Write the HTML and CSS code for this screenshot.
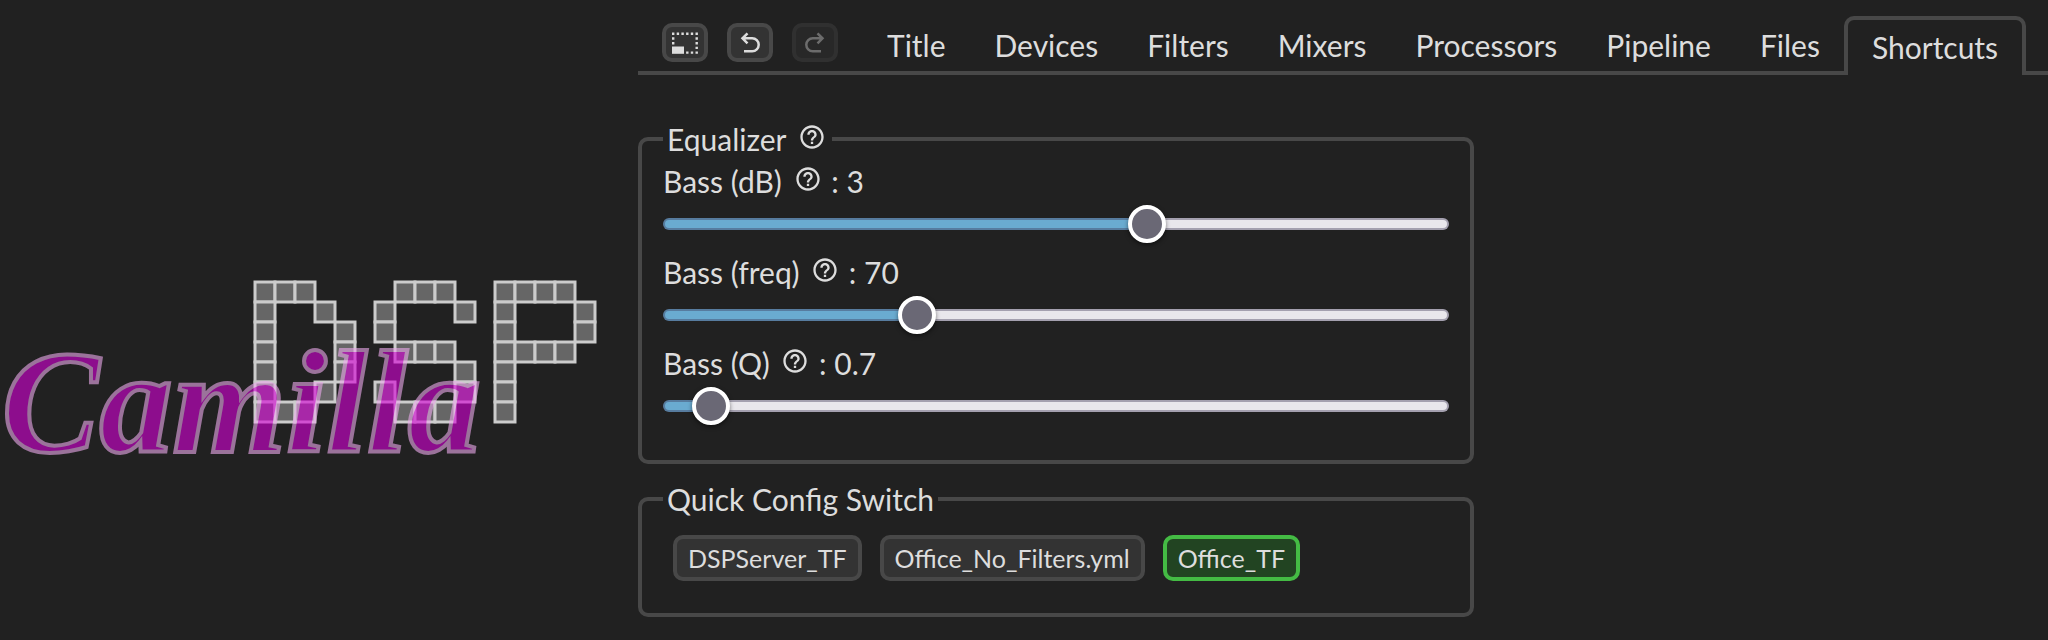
FILE: index.html
```
<!DOCTYPE html>
<html lang="en">
<head>
  <meta charset="UTF-8">
  <meta name="viewport" content="width=device-width, initial-scale=1.0">
  <title>CamillaDSP</title>
  <link rel="stylesheet" href="styles.css">
</head>
<body>
  <svg width="0" height="0" class="defs">
    <symbol id="help" viewBox="0 0 24 24">
      <path d="M11 18h2v-2h-2v2zm1-16C6.48 2 2 6.48 2 12s4.480 10 10 10 10-4.480 10-10S17.520 2 12 2zm0 18c-4.410 0-8-3.590-8-8s3.590-8 8-8 8 3.590 8 8-3.590 8-8 8zm0-14c-2.210 0-4 1.790-4 4h2c0-1.100.9-2 2-2s2 .9 2 2c0 2-3 1.750-3 5h2c0-2.250 3-2.500 3-5 0-2.210-1.790-4-4-4z"/>
    </symbol>
  </svg>

  <div class="app">
    <aside class="sidebar">
      <svg class="logo" viewBox="0 0 600 230" role="img" aria-label="CamillaDSP">
        <g id="tiles" class="tiles"></g>
        <text class="logo-name" x="2" y="174">Camilla</text>
      </svg>
    </aside>

    <main class="main">
      <nav class="tabs">
        <div class="tools">
          <button type="button" class="tool" aria-label="Compact view">
            <svg viewBox="0 0 28 24" width="28" height="24">
              <path class="dots" d="M1 2.800H27M2.200 6.300V14M25.700 6.300V23M15.100 21.600H23"/>
              <rect x="1" y="15.500" width="12" height="7.300"/>
            </svg>
          </button>
          <button type="button" class="tool" aria-label="Undo">
            <svg viewBox="0 0 24 24" width="24" height="24">
              <path class="line" d="M9.500 2.300L4.500 7.300L9.500 12.300M5 7.300H14.200A6.500 6.500 0 0 1 14.200 20.300H6"/>
            </svg>
          </button>
          <button type="button" class="tool" aria-label="Redo" disabled>
            <svg viewBox="0 0 24 24" width="24" height="24">
              <path class="line" d="M14.500 2.300L19.500 7.300L14.500 12.300M19 7.300H9.800A6.500 6.500 0 0 0 9.800 20.300H18"/>
            </svg>
          </button>
        </div>
        <a class="tab" href="#title">Title</a>
        <a class="tab" href="#devices">Devices</a>
        <a class="tab" href="#filters">Filters</a>
        <a class="tab" href="#mixers">Mixers</a>
        <a class="tab" href="#processors">Processors</a>
        <a class="tab" href="#pipeline">Pipeline</a>
        <a class="tab" href="#files">Files</a>
        <a class="tab active" href="#shortcuts">Shortcuts</a>
        <div class="tabs-rest"></div>
      </nav>

      <div class="panels">
        <fieldset class="box equalizer">
          <legend>Equalizer <svg class="help"><use href="#help"/></svg></legend>
          <div class="shortcut">
            <label for="bass-db">Bass (dB) <svg class="help"><use href="#help"/></svg> : <span>3</span></label>
            <input type="range" id="bass-db" min="-12" max="12" step="0.1" value="3">
          </div>
          <div class="shortcut">
            <label for="bass-freq">Bass (freq) <svg class="help"><use href="#help"/></svg> : <span>70</span></label>
            <input type="range" id="bass-freq" min="20" max="178" step="1" value="70">
          </div>
          <div class="shortcut">
            <label for="bass-q">Bass (Q) <svg class="help"><use href="#help"/></svg> : <span>0.7</span></label>
            <input type="range" id="bass-q" min="0.1" max="15.5" step="0.1" value="0.7">
          </div>
        </fieldset>

        <fieldset class="box">
          <legend>Quick Config Switch</legend>
          <div class="configs">
            <button type="button" class="config">DSPServer_TF</button>
            <button type="button" class="config">Office_No_Filters.yml</button>
            <button type="button" class="config selected">Office_TF</button>
          </div>
        </fieldset>
      </div>
    </main>
  </div>

  <script src="script.js"></script>
</body>
</html>
```

FILE: styles.css
```
* {
  box-sizing: border-box;
}
body {
  margin: 0;
  background-color: #212121;
  color: #ddd;
  font-family: Lato, "Noto Sans", sans-serif;
  font-size: 30px;
  line-height: 36px;
}
svg {
  fill: currentColor;
}
.defs {
  position: absolute;
}
.app {
  display: flex;
}

/* logo */
.sidebar {
  flex: 0 0 638px;
  padding-top: 278px;
}
.logo {
  display: block;
  width: 600px;
  overflow: visible;
}
.tiles {
  fill: #666;
  stroke: #ccc;
  stroke-width: 3;
}
.logo-name {
  font-family: "Liberation Serif", serif;
  font-size: 146px;
  font-style: italic;
  font-weight: bold;
  fill: #d500d5;
  stroke: #ecaaec;
  stroke-width: 4;
  opacity: 0.6;
}

/* tabs */
.main {
  flex: 1;
  min-width: 0;
}
.tabs {
  display: flex;
  padding-top: 16px;
}
.tools {
  display: flex;
  gap: 19px;
  padding: 7px 24px 9px;
  border-bottom: 4px solid #484848;
}
.tool {
  display: flex;
  align-items: center;
  justify-content: center;
  width: 46px;
  height: 39px;
  padding: 0;
  border: 4px solid #484848;
  border-radius: 10px;
  background-color: #333;
  color: #ddd;
}
.tool svg {
  flex: none;
}
.tool:disabled {
  opacity: 0.4;
}
.dots {
  fill: none;
  stroke: currentColor;
  stroke-width: 2.4;
  stroke-dasharray: 2.4 2.3;
}
.line {
  fill: none;
  stroke: currentColor;
  stroke-width: 2.5;
}
.tab {
  padding: 11px 24px 8px 25px;
  border-bottom: 4px solid #484848;
  color: inherit;
  text-decoration: none;
}
.tab.active {
  padding: 9px 24px 10px;
  border: 4px solid #484848;
  border-bottom: none;
  border-radius: 10px 10px 0 0;
}
.tabs-rest {
  flex: 1;
  border-bottom: 4px solid #484848;
}

/* shortcuts */
.panels {
  max-width: 836px;
  padding-top: 46px;
}
.box {
  min-width: 0;
  margin: 0 0 17px;
  padding: 18px 21px 32px;
  border: 4px solid #484848;
  border-radius: 10px;
}
.equalizer {
  padding: 6px 21px 24px;
}
legend {
  padding: 0 4px;
}
.help {
  width: 28px;
  height: 28px;
  margin: -4px 2px -4px 4px;
  vertical-align: 4px;
}
.shortcut {
  height: 91px;
}
.shortcut label {
  display: block;
}
input[type="range"] {
  appearance: none;
  display: block;
  width: 100%;
  height: 38px;
  margin: 6px 0 0;
  background: none;
}
input[type="range"]::-webkit-slider-runnable-track {
  height: 12px;
  border: 2px solid rgba(60, 55, 85, 0.4);
  border-radius: 6px;
  background: linear-gradient(to right, #6aabd0 var(--fill), #e9e7ec var(--fill)) border-box;
}
input[type="range"]::-webkit-slider-thumb {
  appearance: none;
  width: 38px;
  height: 38px;
  margin: -15px -2px 0;
  border: 4px solid #fff;
  border-radius: 50%;
  background-color: #6a6875;
  box-shadow: 0 2px 4px rgba(0, 0, 0, 0.5);
}
.configs {
  display: flex;
  gap: 18px;
  padding: 0 10px;
}
.config {
  height: 46px;
  padding: 0 11px;
  border: 4px solid #484848;
  border-radius: 10px;
  background-color: #333;
  color: #ddd;
  font-family: inherit;
  font-size: 25px;
}
.config.selected {
  border-color: #4b4;
  background-color: #242;
}
```

FILE: script.js
```
// Fill the slider tracks up to the thumb
function updateFill(input) {
  const part = (input.value - input.min) / (input.max - input.min);
  input.style.setProperty('--fill', (part * 100) + '%');
}

document.querySelectorAll('input[type="range"]').forEach(input => {
  updateFill(input);
  input.addEventListener('input', () => {
    updateFill(input);
    input.parentNode.querySelector('span').textContent = input.value;
  });
});

// Tiles of the logo
const rows = [
  'xxx....xxx..xxxx.',
  'x..x..x...x.x...x',
  'x...x.x.....x...x',
  'x...x..xxx..xxxx.',
  'x...x.....x.x....',
  'x..x..x...x.x....',
  'xxx....xxx..x....'
];
const tiles = document.getElementById('tiles');
rows.forEach((row, y) => {
  [...row].forEach((cell, x) => {
    if (cell !== 'x') return;
    const rect = document.createElementNS('http://www.w3.org/2000/svg', 'rect');
    rect.setAttribute('x', 255 + x * 20);
    rect.setAttribute('y', 4 + y * 20);
    rect.setAttribute('width', 20);
    rect.setAttribute('height', 20);
    tiles.appendChild(rect);
  });
});
```
